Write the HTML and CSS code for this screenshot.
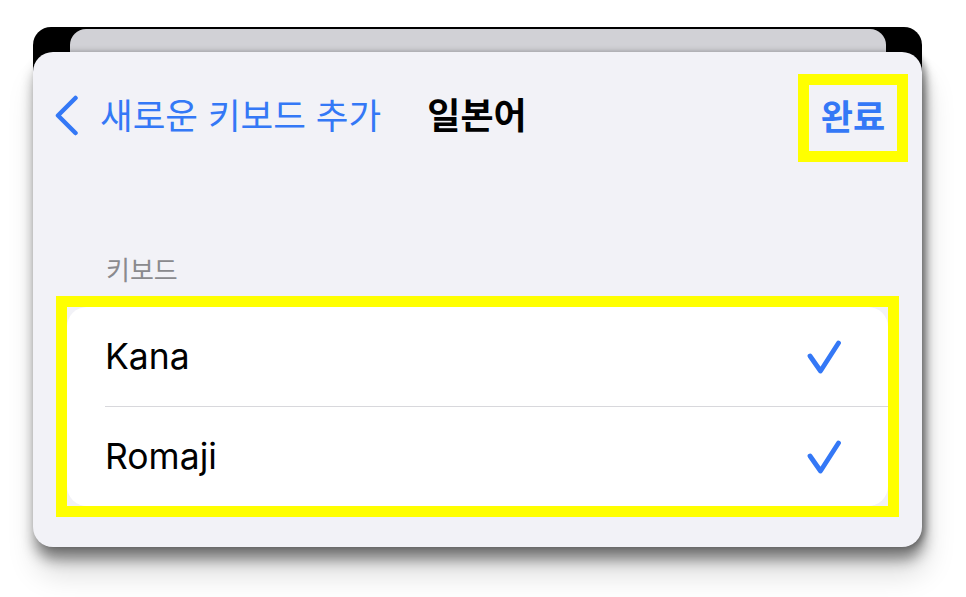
FILE: index.html
```html
<!DOCTYPE html>
<html lang="ko">
<head>
    <meta charset="UTF-8">
    <meta name="viewport" content="width=device-width, initial-scale=1.0">
    <title>일본어 키보드</title>
    <link rel="stylesheet" href="styles.css">
</head>
<body>
    <div class="frame">
        <div class="back-card"></div>
        <div class="sheet">
            <div class="nav">
                <a class="back" href="#">
                    <svg class="chevron" width="25" height="41" viewBox="0 0 25 41">
                        <path d="M21.5 3 L4 20.5 L21.5 38" fill="none" stroke="#3478f6" stroke-width="4.5" stroke-linecap="round" stroke-linejoin="round"/>
                    </svg>
                    <span>새로운 키보드 추가</span>
                </a>
                <div class="title">일본어</div>
                <div class="actions">
                    <a class="done" href="#">완료</a>
                </div>
            </div>

            <div class="content">
                <div class="section-title">키보드</div>
                <div class="highlight">
                    <div class="list">
                        <div class="row">
                            <span>Kana</span>
                            <svg class="check" width="34" height="36" viewBox="0 0 34 36">
                                <path d="M3 17 L13.5 32 L31.5 4" fill="none" stroke="#3478f6" stroke-width="4.8" stroke-linecap="round" stroke-linejoin="round"/>
                            </svg>
                        </div>
                        <div class="row">
                            <span>Romaji</span>
                            <svg class="check" width="34" height="36" viewBox="0 0 34 36">
                                <path d="M3 17 L13.5 32 L31.5 4" fill="none" stroke="#3478f6" stroke-width="4.8" stroke-linecap="round" stroke-linejoin="round"/>
                            </svg>
                        </div>
                    </div>
                </div>
            </div>
        </div>
    </div>
</body>
</html>
```

FILE: styles.css
```css
html, body {
    min-height: 597px;
}

body {
    margin: 0;
    padding: 0 0 50px 0;
    box-sizing: border-box;
    background-color: #fff;
    font-family: "Noto Sans CJK KR", "Noto Sans", sans-serif;
}

.frame {
    width: 889px;
    margin: 27px 0 0 33px;
    padding-top: 2px;
    border-radius: 18px 18px 0 0;
    background: linear-gradient(#000 0, #000 60px, transparent 60px);
}

.back-card {
    height: 23px;
    margin: 0 36px 0 37px;
    background-color: #d1d1d6;
    border-radius: 16px 16px 0 0;
}

.sheet {
    background-color: #f2f2f7;
    border-radius: 20px;
    box-shadow: 2px 12px 14px rgba(0, 0, 0, 0.45),
                4px 26px 30px rgba(0, 0, 0, 0.15),
                4px 0 6px rgba(0, 0, 0, 0.3);
}

.nav {
    display: grid;
    grid-template-columns: 1fr auto 1fr;
    align-items: center;
    padding: 22px 14px 0 21px;
}

.back {
    display: flex;
    align-items: center;
    gap: 21px;
    color: #3478f6;
    text-decoration: none;
    font-size: 35.5px;
    white-space: nowrap;
}

.back span {
    padding-bottom: 10px;
}

.chevron {
    margin-top: -6px;
}

.title {
    font-size: 36px;
    font-weight: bold;
    color: #000;
    padding: 0 8px 10px 0;
}

.actions {
    display: flex;
    justify-content: flex-end;
}

.done {
    box-sizing: border-box;
    width: 110px;
    height: 88px;
    display: flex;
    align-items: center;
    justify-content: center;
    padding-bottom: 8px;
    border: 11px solid #ffff00;
    color: #3478f6;
    text-decoration: none;
    font-size: 35px;
    font-weight: bold;
}

.content {
    padding: 0 23px 30px 23px;
}

.section-title {
    margin-top: 92px;
    margin-bottom: 12px;
    padding-left: 50px;
    font-size: 26px;
    line-height: 30px;
    color: #8a8a8e;
}

.highlight {
    border: 11px solid #ffff00;
}

.list {
    background-color: #fff;
    border-radius: 20px;
    padding-left: 38px;
}

.row {
    display: flex;
    justify-content: space-between;
    align-items: center;
    height: 99px;
    padding-right: 47px;
    font-family: Inter, "Liberation Sans", sans-serif;
    font-size: 35.5px;
    color: #000;
}

.row + .row {
    border-top: 1px solid #d8d8dc;
}
```
